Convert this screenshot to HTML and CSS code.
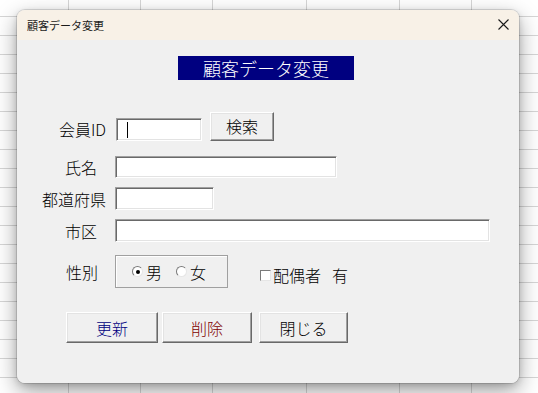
FILE: index.html
```html
<!DOCTYPE html>
<html lang="ja">
<head>
<meta charset="utf-8">
<title>顧客データ変更</title>
<link rel="stylesheet" href="styles.css">
</head>
<body>
<div class="sheet">
  <div class="dialog">
    <div class="titlebar">
      <span class="title">顧客データ変更</span>
      <svg class="close" width="11" height="11" viewBox="0 0 11 11"><path d="M0.5 0.5 L10.5 10.5 M10.5 0.5 L0.5 10.5" stroke="#1a1a1a" stroke-width="1.1" fill="none"/></svg>
    </div>
    <div class="body">
      <div class="banner">顧客データ変更</div>

      <div class="row row-id">
        <span class="lbl lbl-id">会員ID</span>
        <div class="field f-id"><span class="caret"></span></div>
        <button class="btn btn-search">検索</button>
      </div>

      <div class="row row-name">
        <span class="lbl lbl-name">氏名</span>
        <div class="field f-name"></div>
      </div>

      <div class="row row-pref">
        <span class="lbl lbl-pref">都道府県</span>
        <div class="field f-pref"></div>
      </div>

      <div class="row row-city">
        <span class="lbl lbl-city">市区</span>
        <div class="field f-city"></div>
      </div>

      <div class="row row-sex">
        <span class="lbl lbl-sex">性別</span>
        <div class="frame">
          <span class="radio on"></span><span class="opt">男</span>
          <span class="radio"></span><span class="opt">女</span>
        </div>
        <div class="spouse">
          <span class="check"></span><span class="chk-text">配偶者</span><span class="chk-val">有</span>
        </div>
      </div>

      <div class="row row-btns">
        <button class="btn b-update">更新</button>
        <button class="btn b-delete">削除</button>
        <button class="btn b-close">閉じる</button>
      </div>
    </div>
  </div>
</div>
</body>
</html>
```

FILE: styles.css
```css
* { box-sizing: border-box; }
html, body { margin: 0; padding: 0; }
body {
  width: 538px;
  height: 393px;
  overflow: hidden;
  font-family: "Noto Sans CJK JP", "Noto Sans", sans-serif;
  color: #000;
}
.sheet {
  width: 538px;
  height: 393px;
  padding: 10px 0 0 17px;
  background-color: #fff;
  background-image:
    linear-gradient(to right,
      transparent 68px, #d6d6d6 68px 69px,
      transparent 69px 140px, #d6d6d6 140px 141px,
      transparent 141px 212px, #d6d6d6 212px 213px,
      transparent 213px 306px, #d6d6d6 306px 307px,
      transparent 307px 399px, #d6d6d6 399px 400px,
      transparent 400px 471px, #d6d6d6 471px 472px,
      transparent 472px),
    repeating-linear-gradient(to bottom,
      transparent 0 18px, #d6d6d6 18px 19px);
  background-position: 0 0, 0 -2px;
}
.dialog {
  width: 502px;
  height: 373px;
  border-radius: 8px;
  background: #f0f0f0;
  box-shadow: 0 0 0 1px rgba(0,0,0,0.12), 0 8px 22px rgba(0,0,0,0.38), 0 2px 6px rgba(0,0,0,0.15);
  display: flex;
  flex-direction: column;
}
.titlebar {
  height: 30px;
  flex: none;
  background: #f8f1e7;
  border-radius: 8px 8px 0 0;
  display: flex;
  align-items: center;
  padding: 0 10px 0 10px;
}
.title {
  font-size: 11px;
  line-height: 30px;
  color: #1a1a1a;
}
.close {
  margin-left: auto;
  margin-top: -1px;
}
.body {
  flex: 1;
  border-radius: 0 0 8px 8px;
  background: #f0f0f0;
  padding-top: 16px;
  display: flex;
  flex-direction: column;
  align-items: flex-start;
}
.banner {
  margin-left: 161px;
  width: 176px;
  height: 24px;
  background: #000080;
  color: #fff;
  font-size: 18px;
  line-height: 24px;
  text-align: center;
  font-weight: 300;
}
.row {
  display: flex;
  align-items: center;
}
.lbl {
  font-size: 16px;
  font-weight: 300;
  text-align: right;
  flex: none;
  white-space: nowrap;
}
.field {
  background: #fff;
  border: 1px solid;
  border-color: #a0a0a0 #fff #fff #a0a0a0;
  box-shadow: inset 1px 1px 0 #696969, inset -1px -1px 0 #e3e3e3;
  position: relative;
  flex: none;
}
.btn {
  font-family: inherit;
  font-size: 16px;
  font-weight: 300;
  background: #f0f0f0;
  border: 1px solid;
  border-color: #fff #696969 #696969 #fff;
  box-shadow: inset -1px -1px 0 #a0a0a0, inset 1px 1px 0 #e3e3e3;
  padding: 0;
  color: #000;
  line-height: 1;
  flex: none;
}

/* row 1 */
.row-id { margin-top: 32px; height: 29px; align-items: flex-end; }
.lbl-id { width: 99px; padding-right: 10px; line-height: 23px; }
.f-id { width: 86px; height: 23px; }
.caret {
  position: absolute;
  left: 10px;
  top: 3px;
  width: 1px;
  height: 16px;
  background: #000;
}
.btn-search { margin-left: 8px; width: 64px; height: 29px; padding-bottom: 2px; }

/* row 2 */
.row-name { margin-top: 15px; height: 22px; }
.lbl-name { width: 98px; padding-right: 18px; }
.f-name { width: 222px; height: 22px; }

/* row 3 */
.row-pref { margin-top: 9px; height: 23px; }
.lbl-pref { width: 98px; padding-right: 9px; }
.f-pref { width: 99px; height: 23px; }

/* row 4 */
.row-city { margin-top: 9px; height: 23px; }
.lbl-city { width: 98px; padding-right: 18px; }
.f-city { width: 375px; height: 23px; }

/* row 5 */
.row-sex { margin-top: 13px; height: 33px; }
.lbl-sex { width: 98px; padding-right: 17px; }
.frame {
  width: 113px;
  height: 33px;
  border: 1px solid #a0a0a0;
  box-shadow: inset 1px 1px 0 #fff;
  display: flex;
  align-items: center;
  padding-left: 16px;
  flex: none;
}
.radio {
  width: 11px;
  height: 11px;
  border-radius: 50%;
  border: 1px solid;
  border-color: #7a7a7a #e6e6e6 #e6e6e6 #7a7a7a;
  background: #fff;
  display: flex;
  align-items: center;
  justify-content: center;
  flex: none;
}
.radio.on::after {
  content: "";
  width: 4px;
  height: 4px;
  border-radius: 50%;
  background: #000;
}
.opt {
  font-size: 16px;
  font-weight: 300;
  margin-left: 3px;
  margin-right: 14px;
}
.spouse {
  display: flex;
  align-items: center;
  margin-left: 32px;
  margin-top: 7px;
}
.check {
  width: 11px;
  height: 11px;
  border: 1px solid;
  border-color: #7a7a7a #e6e6e6 #e6e6e6 #7a7a7a;
  background: #fff;
  flex: none;
}
.chk-text {
  font-size: 16px;
  font-weight: 300;
  margin-left: 2px;
}
.chk-val {
  font-size: 16px;
  font-weight: 300;
  margin-left: 11px;
}

/* row 6 */
.row-btns { margin-top: 24px; margin-left: 49px; height: 31px; }
.row-btns .btn { height: 31px; }
.b-update { width: 92px; color: #000080; }
.b-delete { width: 90px; margin-left: 4px; color: #800000; }
.b-close { width: 89px; margin-left: 7px; }
```
